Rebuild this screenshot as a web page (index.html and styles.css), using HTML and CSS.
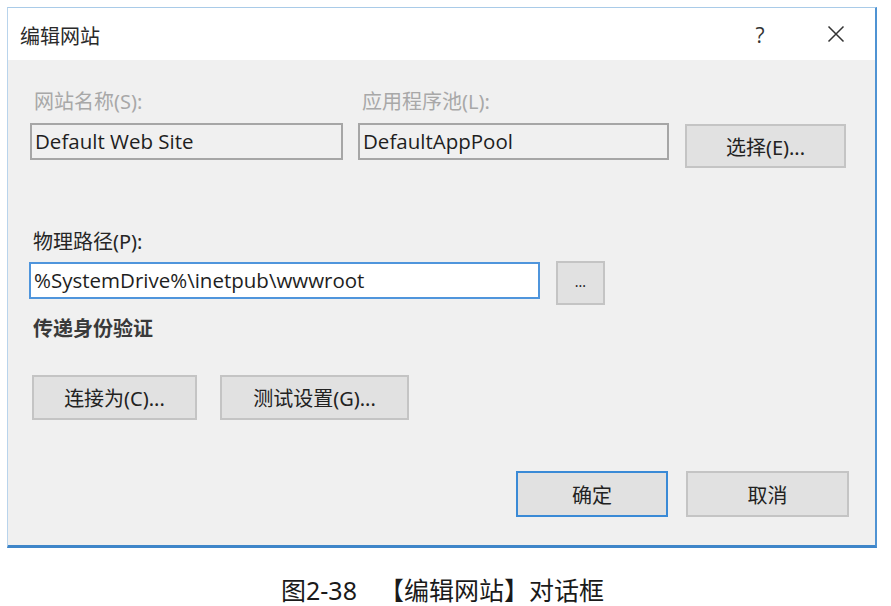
FILE: index.html
```html
<!DOCTYPE html>
<html lang="zh-CN">
<head>
<meta charset="utf-8">
<title>编辑网站</title>
<link rel="stylesheet" href="styles.css">
</head>
<body>
<div class="page">
  <div class="dialog">
    <div class="titlebar">
      <span class="title">编辑网站</span>
      <span class="help">?</span>
      <span class="close">
        <svg width="18" height="18" viewBox="0 0 18 18"><path d="M1.5 1.5 L16.5 16.5 M16.5 1.5 L1.5 16.5" stroke="#333" stroke-width="1.5" fill="none"/></svg>
      </span>
    </div>
    <div class="content">
      <div class="grid-top">
        <div class="label disabled">网站名称(S):</div>
        <div class="label disabled">应用程序池(L):</div>
        <div></div>
        <div class="field">Default Web Site</div>
        <div class="field">DefaultAppPool</div>
        <div class="btn btn-select">选择(E)...</div>
      </div>
      <div class="label label-path">物理路径(P):</div>
      <div class="path-row">
        <div class="field field-path">%SystemDrive%\inetpub\wwwroot</div>
        <div class="btn btn-dots">...</div>
      </div>
      <div class="label label-auth">传递身份验证</div>
      <div class="btn-row">
        <div class="btn btn-connect">连接为(C)...</div>
        <div class="btn btn-test">测试设置(G)...</div>
      </div>
      <div class="footer">
        <div class="btn btn-ok">确定</div>
        <div class="btn btn-cancel">取消</div>
      </div>
    </div>
  </div>
  <div class="caption"><span>图2-38</span><span class="cap-main">【编辑网站】对话框</span></div>
</div>
</body>
</html>
```
FILE: styles.css
```css
* { box-sizing: border-box; }
html, body { margin: 0; padding: 0; background: #ffffff; }
body {
  font-family: "Noto Sans", "Noto Sans CJK SC", sans-serif;
  color: #222;
  width: 891px;
  height: 606px;
  overflow: hidden;
}
.page {
  padding: 7px 0 0 7px;
  display: flex;
  flex-direction: column;
}
.dialog {
  width: 870px;
  height: 541px;
  display: flex;
  flex-direction: column;
  border-top: 1px solid #a9cbe8;
  border-left: 1px solid #b9d4ec;
  border-right: 2px solid #4f93d3;
  border-bottom: 3px solid #3f86c9;
  background: #f0f0f0;
}
.titlebar {
  height: 52px;
  background: #ffffff;
  display: flex;
  align-items: center;
  padding-left: 12px;
}
.title {
  font-size: 20px;
  color: #2a2a2a;
  flex: 1;
  position: relative;
  top: 1px;
}
.help {
  font-family: "Open Sans", "Noto Sans", sans-serif;
  font-size: 21px;
  color: #333;
  width: 20px;
  text-align: center;
  margin-right: 57px;
  position: relative;
  top: 1px;
}
.close {
  width: 18px;
  height: 18px;
  display: flex;
  margin-right: 30px;
}
.content {
  flex: 1;
  background: #f0f0f0;
  padding: 31px 0 0 22px;
  display: flex;
  flex-direction: column;
}
.label {
  font-size: 20px;
  line-height: 22px;
  height: 22px;
  padding-left: 4px;
  color: #262626;
  white-space: nowrap;
}
.label.disabled { color: #a8a8a8; }
.grid-top {
  display: grid;
  grid-template-columns: 313px 311px 162px;
  column-gap: 15px;
  row-gap: 10px;
  align-items: start;
}
.field {
  height: 37px;
  border: 2px solid #a6a6a6;
  background: #f0f0f0;
  font-size: 20.5px;
  line-height: 33px;
  padding-left: 3px;
  color: #1e1e1e;
  font-family: "Open Sans", "Noto Sans", sans-serif;
  white-space: nowrap;
}
.btn {
  background: #e1e1e1;
  border: 2px solid #c4c4c4;
  display: flex;
  align-items: center;
  justify-content: center;
  font-size: 20px;
  color: #222;
  font-family: "Noto Sans", "Noto Sans CJK SC", sans-serif;
  white-space: nowrap;
}
.btn-select {
  height: 44px;
  margin-top: 1px;
  margin-left: 1px;
}
.label-path { margin-top: 63px; margin-left: -1px; }
.path-row {
  display: flex;
  align-items: flex-start;
  gap: 16px;
  margin-top: 8px;
}
.field-path {
  width: 511px;
  margin-left: -1px;
  margin-top: 1px;
  background: #ffffff;
  border: 2px solid #4f95dc;
}
.btn-dots {
  width: 49px;
  height: 44px;
  font-size: 14px;
  padding-bottom: 4px;
}
.label-auth {
  margin-top: 13px;
  font-weight: 700;
  color: #3a3a3a;
  margin-left: -1px;
}
.btn-row {
  display: flex;
  gap: 23px;
  margin-top: 35px;
  margin-left: 2px;
}
.btn-connect { width: 165px; height: 45px; }
.btn-test { width: 189px; height: 45px; }
.footer {
  display: flex;
  gap: 18px;
  margin-top: 51px;
  margin-left: 486px;
}
.btn-ok {
  width: 152px;
  height: 46px;
  border: 2px solid #3a8ad6;
}
.btn-cancel { width: 163px; height: 46px; }
.caption {
  margin-top: 29px;
  display: flex;
  justify-content: flex-start;
  padding-left: 274px;
  font-size: 25px;
  line-height: 26px;
  color: #1a1a1a;
  font-family: "Noto Sans", "Noto Sans CJK SC", sans-serif;
}
.cap-main { margin-left: 22px; }
```
